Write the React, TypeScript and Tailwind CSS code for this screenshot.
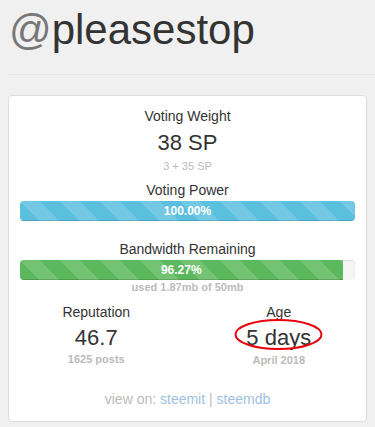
const stripes =
  "bg-[linear-gradient(45deg,rgba(255,255,255,.15)_25%,transparent_25%,transparent_50%,rgba(255,255,255,.15)_50%,rgba(255,255,255,.15)_75%,transparent_75%,transparent)] bg-size-[40px_40px]";

function Bar({ value, color }: { value: number; color: string }) {
  return (
    <div className="h-5 w-full rounded overflow-hidden bg-[#f5f5f5] shadow-[inset_0_1px_2px_rgba(0,0,0,.1)]">
      <div
        className={`h-full ${color} ${stripes} shadow-[inset_0_-1px_0_rgba(0,0,0,.15)] text-white text-[12px] font-bold leading-5 text-center`}
        style={{ width: `${value}%` }}
      >
        {value.toFixed(2)}%
      </div>
    </div>
  );
}

export default function App() {
  return (
    <div className="min-h-screen w-full bg-[#f0f0f0] font-['Liberation_Sans',Arial,sans-serif] text-[#333] overflow-hidden">
      <h1 className="pt-[7px] pl-[9px] text-[42px] leading-[45px] font-normal">
        <span className="text-[#777]">@</span>pleasestop
      </h1>
      <hr className="mt-[22px] ml-[8px] border-t border-[#e6e6e6]" />
      <div className="mt-[20px] ml-[8px] w-[359px] bg-white border border-[#dddddd] rounded px-[11px] pt-[10px] pb-[12px] text-center">
        <div className="text-[14px] leading-5">Voting Weight</div>
        <div className="text-[22px] leading-[26px] mt-[4px]">38 SP</div>
        <div className="text-[11px] leading-4 mt-[2px] text-[#bbb]">3 + 35 SP</div>
        <div className="text-[14px] leading-5 mt-[6px]">Voting Power</div>
        <div className="mt-[1px]">
          <Bar value={100} color="bg-[#5bc0de]" />
        </div>
        <div className="text-[14px] leading-5 mt-[18px]">Bandwidth Remaining</div>
        <div className="mt-[1px]">
          <Bar value={96.27} color="bg-[#5cb85c]" />
        </div>
        <div className="text-[11px] leading-[14px] font-bold text-[#bbb]">used 1.87mb of 50mb</div>
        <div className="grid grid-cols-2 -mx-[15px] mt-[8px]">
          <div>
            <div className="text-[14px] leading-5">Reputation</div>
            <div className="text-[22px] leading-[26px] mt-[3px]">46.7</div>
            <div className="text-[11px] leading-[14px] font-bold text-[#bbb] mt-[1px]">1625 posts</div>
          </div>
          <div>
            <div className="text-[14px] leading-5">Age</div>
            <div className="mt-[3px]">
              <span className="relative inline-block text-[22px] leading-[26px]">
                5 days
                <svg
                  className="absolute left-[-12px] top-[-6px]"
                  width="89"
                  height="31"
                  viewBox="0 0 89 31"
                  fill="none"
                >
                  <ellipse cx="44.5" cy="15.5" rx="43" ry="14.5" stroke="#e8000b" strokeWidth="2" />
                </svg>
              </span>
            </div>
            <div className="text-[11px] leading-[14px] font-bold text-[#bbb] mt-[1px]">April 2018</div>
          </div>
        </div>
        <div className="text-[14px] leading-5 mt-[22px] text-[#bbb]">
          view on: <span className="text-[#9dbfe0]">steemit</span> | <span className="text-[#9dbfe0]">steemdb</span>
        </div>
      </div>
    </div>
  );
}
